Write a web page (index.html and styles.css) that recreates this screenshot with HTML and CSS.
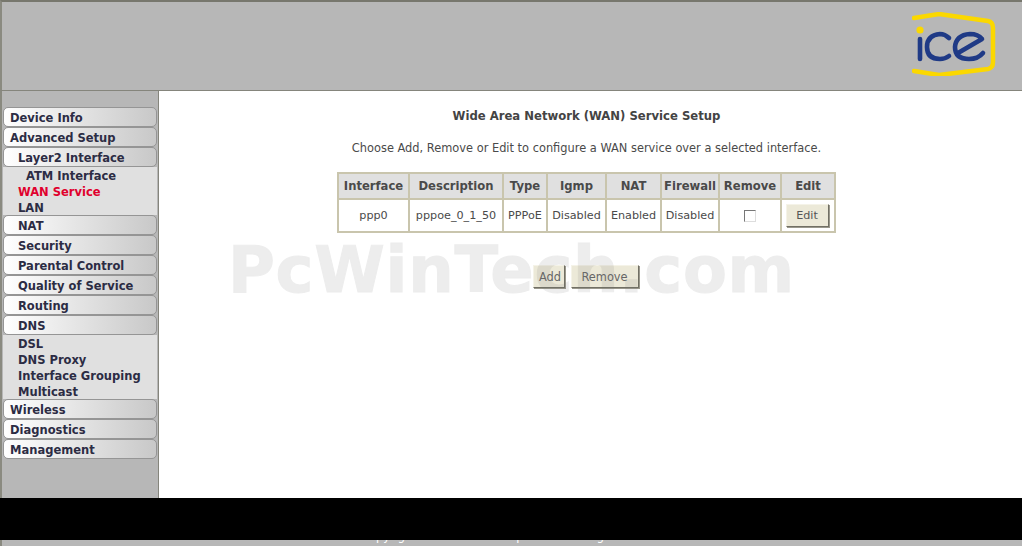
FILE: index.html
```html
<!DOCTYPE html>
<html lang="en">
<head>
<meta charset="utf-8">
<title>WAN Service Setup</title>
<link rel="stylesheet" href="styles.css">
</head>
<body>
<div class="page">
  <header class="banner">
    <svg class="logo" width="84" height="64" viewBox="0 0 84 64" aria-label="ice">
      <path class="logo-frame" d="M2 6 L27 2 L76 9 Q81 10 81 16 L81 50 Q81 56 76 57 L27 63 L2 59"/>
      <circle class="logo-dot" cx="8" cy="18" r="3.6"/>
      <path class="logo-mark" d="M8 27 V47"/>
      <path class="logo-mark" d="M37 26 Q33 22 28 22 Q15 23 15 35 Q15 47 28 47 Q33 47 37 44"/>
      <path class="logo-mark" d="M46 41 L70 27 Q66 22 58 22 Q44 23 43 35 Q43 47 57 47 Q66 47 71 41"/>
    </svg>
  </header>
  <div class="body-row">
    <nav class="sidebar">
      <a class="btn">Device Info</a>
      <a class="btn">Advanced Setup</a>
      <a class="btn lvl2">Layer2 Interface</a>
      <div class="sub">
        <a class="lvl3">ATM Interface</a>
        <a class="lvl2 active">WAN Service</a>
        <a class="lvl2">LAN</a>
      </div>
      <a class="btn lvl2">NAT</a>
      <a class="btn lvl2">Security</a>
      <a class="btn lvl2">Parental Control</a>
      <a class="btn lvl2">Quality of Service</a>
      <a class="btn lvl2">Routing</a>
      <a class="btn lvl2">DNS</a>
      <div class="sub">
        <a class="lvl2">DSL</a>
        <a class="lvl2">DNS Proxy</a>
        <a class="lvl2">Interface Grouping</a>
        <a class="lvl2">Multicast</a>
      </div>
      <a class="btn">Wireless</a>
      <a class="btn">Diagnostics</a>
      <a class="btn">Management</a>
    </nav>
    <main class="content">
      <h1 class="title">Wide Area Network (WAN) Service Setup</h1>
      <p class="intro">Choose Add, Remove or Edit to configure a WAN service over a selected interface.</p>
      <table class="wan">
        <thead>
          <tr>
            <th class="c1">Interface</th><th class="c2">Description</th><th class="c3">Type</th><th class="c4">Igmp</th><th class="c5">NAT</th><th class="c6">Firewall</th><th class="c7">Remove</th><th class="c8">Edit</th>
          </tr>
        </thead>
        <tbody>
          <tr>
            <td>ppp0</td><td>pppoe_0_1_50</td><td>PPPoE</td><td>Disabled</td><td>Enabled</td><td>Disabled</td><td><span class="check"></span></td><td><button class="xp edit">Edit</button></td>
          </tr>
        </tbody>
      </table>
      <div class="actions">
        <button class="xp add">Add</button>
        <button class="xp remove">Remove</button>
      </div>
      <div class="watermark">PcWinTech.com</div>
    </main>
  </div>
  <div class="blackout"></div>
  <footer class="strip"><span class="strip-text">Copyright © Broadcom Corporation. All rights reserved.</span></footer>
</div>
</body>
</html>
```
FILE: styles.css
```css
* { box-sizing: border-box; }
html, body { margin: 0; padding: 0; background: #fff; }
.page {
  width: 1022px;
  height: 546px;
  overflow: hidden;
  display: flex;
  flex-direction: column;
  font-family: "DejaVu Sans", sans-serif;
  position: relative;
}
.banner {
  height: 91px;
  flex: none;
  background: #b7b7b7;
  border-top: 2px solid #77776d;
  border-left: 2px solid #8a8a80;
  border-bottom: 1px solid #85857c;
  display: flex;
  justify-content: flex-end;
  padding: 10px 26px 0 0;
}
.logo { display: block; }
.logo-frame { fill: none; stroke: #fbd800; stroke-width: 4.5; stroke-linecap: round; stroke-linejoin: round; }
.logo-dot { fill: #fbd800; }
.logo-mark { fill: none; stroke: #1f3a86; stroke-width: 4.6; stroke-linecap: round; stroke-linejoin: round; }
.body-row { flex: 1; display: flex; min-height: 0; }
.sidebar {
  width: 159px;
  flex: none;
  display: flex;
  flex-direction: column;
  padding: 16px 1px 0 1px;
  background: #b7b7b7;
  border-left: 2px solid #8a8a80;
  border-right: 1px solid #85857c;
  font-weight: 700;
  font-size: 11.5px;
  color: #2c2c44;
}
.btn {
  height: 20px;
  line-height: 20px;
  padding-left: 6px;
  border: 1px solid #959595;
  border-radius: 5px;
  background: linear-gradient(90deg, #fff 0%, #c8c8c8 100%);
}
.btn.lvl2 { padding-left: 14px; }
.sub {
  background: #e0e0e0;
  display: flex;
  flex-direction: column;
}
.sub a { height: 16px; line-height: 18px; }
.sub .lvl2 { padding-left: 15px; }
.sub .lvl3 { padding-left: 23px; }
.sub .active { color: #e0002d; }
.content {
  flex: 1;
  position: relative;
  padding: 0 8px 0 0;
  display: flex;
  flex-direction: column;
  align-items: center;
  color: #4a4a4a;
  font-size: 11.4px;
}
.title { margin: 17px 0 0; font-size: 11.65px; line-height: 16px; font-weight: 700; color: #444; }
.intro { margin: 16px 0 0; line-height: 16px; }
.wan {
  margin-top: 16px;
  border-collapse: collapse;
  table-layout: fixed;
  width: 497px;
  border: 2px solid #c9c5ad;
}
.wan th, .wan td { border: 2px solid #c9c5ad; padding: 0; text-align: center; white-space: nowrap; }
.wan th { height: 26px; background: #e0e0e0; font-size: 11.6px; }
.wan td { height: 33px; padding-bottom: 1px; font-size: 11.2px; }
.c1 { width: 71px; } .c2 { width: 94px; } .c3 { width: 44px; } .c4 { width: 59px; }
.c5 { width: 55px; } .c6 { width: 58px; } .c7 { width: 62px; } .c8 { width: 54px; }
.check {
  display: inline-block;
  width: 12px;
  height: 12px;
  vertical-align: middle;
  border: 1px solid;
  border-color: #777 #ddd #ddd #777;
  background: #fff;
}
.xp {
  height: 23px;
  padding: 0;
  font: inherit;
  color: #666;
  background: #ece9d8;
  border: 1px solid;
  border-color: #f5f3e8 #716f64 #716f64 #f5f3e8;
  box-shadow: 1px 1px 0 #9a988c;
}
.edit { width: 43px; margin-right: 2px; color: #555; }
.actions { margin-top: 32px; padding-right: 2px; display: flex; gap: 6px; }
.add { width: 32px; padding-left: 3px; }
.remove { width: 68px; }
.watermark {
  position: absolute;
  left: 69px;
  top: 137px;
  font-size: 64px;
  line-height: 84px;
  font-weight: 700;
  letter-spacing: .7px;
  color: #787878;
  -webkit-text-stroke: 1px #787878;
  opacity: .13;
  white-space: nowrap;
}
.blackout {
  position: absolute;
  left: 0;
  top: 498px;
  width: 1022px;
  height: 42px;
  background: #000;
  z-index: 2;
}
.strip {
  height: 48px;
  flex: none;
  background: #b7b7b7;
  border-left: 2px solid #8a8a80;
  overflow: hidden;
  padding-left: 359px;
}
.strip-text { display: block; margin-top: 30px; font-size: 11.4px; line-height: 16px; color: #fff; white-space: nowrap; }
```
